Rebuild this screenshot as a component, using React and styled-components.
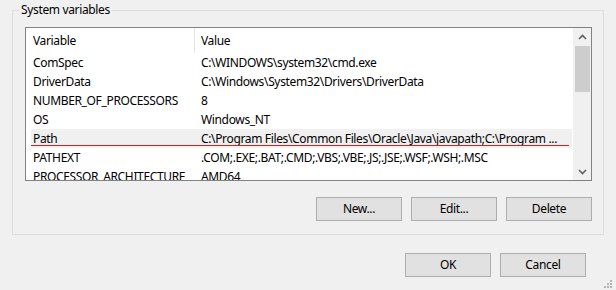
import React from 'react'
import styled, { createGlobalStyle } from 'styled-components'

const GlobalStyle = createGlobalStyle`
    html, body {
        margin: 0;
        padding: 0;
        background: #f0f0f0;
    }
    body {
        font-family: "Noto Sans", "Liberation Sans", sans-serif;
        font-size: 12px;
        letter-spacing: -0.35px;
        color: #000;
    }
`;

const Window = styled.div`
    position: relative;
    width: 616px;
    height: 290px;
    box-sizing: border-box;
    padding-top: 2px;
    background: #f0f0f0;
    overflow: hidden;
`;

const Group = styled.fieldset`
    margin: 0 12px 0 12px;
    padding: 9px 11px 13px 12px;
    border: 1px solid #dcdcdc;
    min-width: 0;
`;

const Legend = styled.legend`
    margin-left: -6px;
    padding: 0 2px;
    line-height: 16px;
    font-size: 12px;
`;

const ListBox = styled.div`
    display: flex;
    height: 154px;
    box-sizing: border-box;
    border: 1px solid #828282;
    background: #fff;
`;

const ListBody = styled.div`
    flex: 1;
    min-width: 0;
    overflow: hidden;
`;

const Header = styled.div`
    display: flex;
    height: 25px;
    align-items: center;
`;

const HeaderCell = styled.div`
    box-sizing: border-box;
    height: 100%;
    display: flex;
    align-items: center;
    width: ${p => p.$width ? `${p.$width}px` : 'auto'};
    flex: ${p => p.$width ? 'none' : '1'};
    padding-left: ${p => p.$pad}px;
    border-right: ${p => p.$divider ? '1px solid #e5e5e5' : 'none'};
    padding-bottom: 1px;
`;

const Row = styled.div`
    position: relative;
    display: flex;
    height: 19px;
    align-items: center;
    margin: 0 1px 0 5px;
    background: ${p => p.$hot ? '#f0f0f0' : 'transparent'};

    &::after {
        content: '';
        display: ${p => p.$hot ? 'block' : 'none'};
        position: absolute;
        left: 0;
        right: 3px;
        bottom: 2px;
        height: 1px;
        background: #d42020;
    }
`;

const Cell = styled.div`
    box-sizing: border-box;
    width: ${p => p.$width ? `${p.$width}px` : 'auto'};
    flex: ${p => p.$width ? 'none' : '1'};
    min-width: 0;
    padding-left: ${p => p.$pad}px;
    white-space: nowrap;
    overflow: hidden;
`;

const ScrollBar = styled.div`
    width: 17px;
    display: flex;
    flex-direction: column;
    background: #f0f0f0;
    border-left: 1px solid #f0f0f0;
`;

const ArrowButton = styled.div`
    height: 17px;
    display: flex;
    align-items: center;
    justify-content: center;
    color: #606060;
`;

const Track = styled.div`
    flex: 1;
    padding: 1px 1px 0 1px;
`;

const Thumb = styled.div`
    height: 46px;
    background: #cdcdcd;
`;

const ButtonRow = styled.div`
    display: flex;
    justify-content: flex-end;
    gap: ${p => p.$gap}px;
    margin-top: ${p => p.$top}px;
    padding-right: ${p => p.$right || 0}px;
`;

const Button = styled.button`
    width: 86px;
    height: 24px;
    box-sizing: border-box;
    background: #e1e1e1;
    border: 1px solid #adadad;
    font-family: inherit;
    font-size: 12px;
    letter-spacing: inherit;
    color: #000;
    padding: 0 0 1px 0;
    margin: 0;
`;

const Grip = styled.svg`
    position: absolute;
    right: 3px;
    bottom: 1px;
`;

const rows = [
    ['ComSpec', 'C:\\WINDOWS\\system32\\cmd.exe'],
    ['DriverData', 'C:\\Windows\\System32\\Drivers\\DriverData'],
    ['NUMBER_OF_PROCESSORS', '8'],
    ['OS', 'Windows_NT'],
    ['Path', 'C:\\Program Files\\Common Files\\Oracle\\Java\\javapath;C:\\Program ...'],
    ['PATHEXT', '.COM;.EXE;.BAT;.CMD;.VBS;.VBE;.JS;.JSE;.WSF;.WSH;.MSC'],
    ['PROCESSOR_ARCHITECTURE', 'AMD64'],
];

function Chevron({ up }) {
    return (
        <svg width="9" height="6" viewBox="0 0 9 6">
            <path
                d={up ? 'M1 5 L4.5 1.5 L8 5' : 'M1 1 L4.5 4.5 L8 1'}
                fill="none"
                stroke="currentColor"
                strokeWidth="1.6"
            />
        </svg>
    )
}

export default function App() {
    return (
        <Window>
            <GlobalStyle />
            <Group>
                <Legend>System variables</Legend>
                <ListBox>
                    <ListBody>
                        <Header>
                            <HeaderCell $width={169} $pad={7} $divider>Variable</HeaderCell>
                            <HeaderCell $pad={6}>Value</HeaderCell>
                        </Header>
                        {rows.map(([name, value]) => (
                            <Row key={name} $hot={name === 'Path'}>
                                <Cell $width={164} $pad={2}>{name}</Cell>
                                <Cell $pad={6}>{value}</Cell>
                            </Row>
                        ))}
                    </ListBody>
                    <ScrollBar>
                        <ArrowButton><Chevron up /></ArrowButton>
                        <Track><Thumb /></Track>
                        <ArrowButton><Chevron /></ArrowButton>
                    </ScrollBar>
                </ListBox>
                <ButtonRow $gap={9} $top={16}>
                    <Button>New...</Button>
                    <Button>Edit...</Button>
                    <Button>Delete</Button>
                </ButtonRow>
            </Group>
            <ButtonRow $gap={9} $top={18} $right={30}>
                <Button>OK</Button>
                <Button>Cancel</Button>
            </ButtonRow>
            <Grip width="9" height="9" viewBox="0 0 9 9">
                <g fill="#b4b4b4">
                    <rect x="6" y="0" width="2" height="2" />
                    <rect x="3" y="3" width="2" height="2" />
                    <rect x="6" y="3" width="2" height="2" />
                    <rect x="0" y="6" width="2" height="2" />
                    <rect x="3" y="6" width="2" height="2" />
                    <rect x="6" y="6" width="2" height="2" />
                </g>
            </Grip>
        </Window>
    )
}
